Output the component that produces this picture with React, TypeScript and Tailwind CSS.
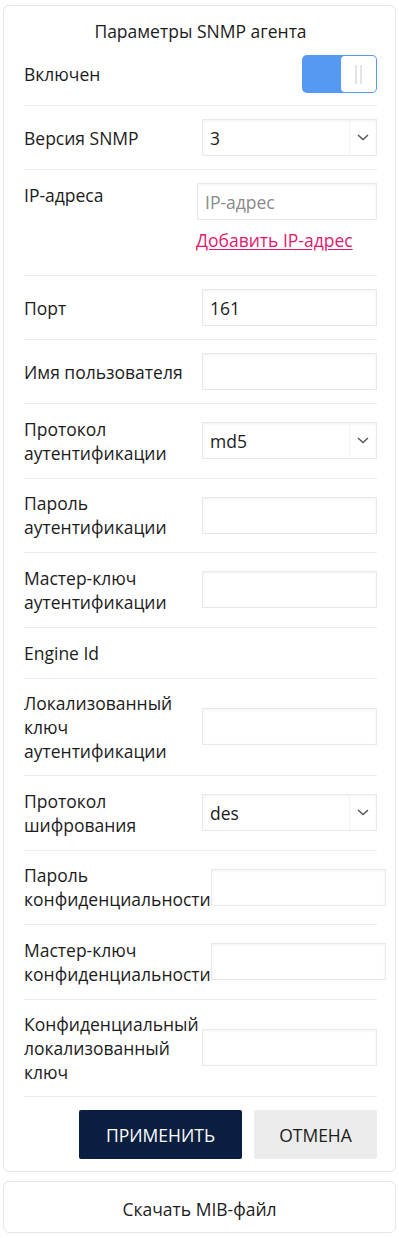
import React from "react";

type Row =
  | { kind: "input"; label: string[]; value?: string }
  | { kind: "select"; label: string[]; value: string }
  | { kind: "text"; label: string[] };

const ROWS: Row[] = [
  { kind: "input", label: ["Порт"], value: "161" },
  { kind: "input", label: ["Имя пользователя"] },
  { kind: "select", label: ["Протокол", "аутентификации"], value: "md5" },
  { kind: "input", label: ["Пароль", "аутентификации"] },
  { kind: "input", label: ["Мастер-ключ", "аутентификации"] },
  { kind: "text", label: ["Engine Id"] },
  { kind: "input", label: ["Локализованный", "ключ", "аутентификации"] },
  { kind: "select", label: ["Протокол", "шифрования"], value: "des" },
  { kind: "input", label: ["Пароль", "конфиденциальности"] },
  { kind: "input", label: ["Мастер-ключ", "конфиденциальности"] },
  { kind: "input", label: ["Конфиденциальный", "локализованный", "ключ"] },
];

// vertical padding per number of label lines
const PAD: Record<number, string> = {
  1: "py-[13px]",
  2: "py-[12.75px]",
  3: "py-[12.25px]",
};

const fieldBox =
  "h-[37px] flex-none bg-white border border-[#e9e9e9] shadow-[inset_0_1px_3px_rgba(0,0,0,0.06)]";

function Select({ value }: { value: string }) {
  return (
    <div className={`${fieldBox} w-[175px] flex items-center`}>
      <span className="flex-1 pl-[7px] text-[#1c1c1c]">{value}</span>
      <span className="h-full w-[27px] border-l border-[#f3f3f3] flex items-center justify-center">
        <svg width="12" height="7" viewBox="0 0 12 7" fill="none">
          <path d="M1 1l5 4.6L11 1" stroke="#555" strokeWidth="1.4" />
        </svg>
      </span>
    </div>
  );
}

function Input({
  value,
  placeholder,
  wide,
}: {
  value?: string;
  placeholder?: string;
  wide?: boolean;
}) {
  return (
    <div className={`${fieldBox} ${wide ? "w-[180px]" : "w-[175px]"} flex items-center pl-[7px]`}>
      {value ? (
        <span className="text-[#1c1c1c]">{value}</span>
      ) : (
        <span className="text-[#8a8a8a]">{placeholder}</span>
      )}
    </div>
  );
}

function Label({ lines, narrow }: { lines: string[]; narrow?: boolean }) {
  return (
    <div className={`flex-none ${narrow ? "basis-[173px]" : "basis-[178px]"}`}>
      {lines.map((l, i) => (
        <div key={i}>{l}</div>
      ))}
    </div>
  );
}

export default function App() {
  return (
    <div
      className="min-h-[1238px] bg-white px-[3px] pt-[5px] text-[17.5px] leading-[24px] text-[#1c1c1c]"
      style={{ fontFamily: '"Open Sans", "Noto Sans", sans-serif' }}
    >
      {/* Main card */}
      <div className="rounded-[6px] border border-[#e6e6e6] pl-[20px] pr-[18px] pt-[13px] pb-[12px]">
        <div className="text-center">Параметры SNMP агента</div>

        <div className="flex items-center justify-between pt-[12px] pb-[12px] border-b border-[#ececec]">
          <span>Включен</span>
          <div className="w-[75px] h-[38px] rounded-[5px] bg-[#5599f4] flex justify-end p-px">
            <div className="w-[35px] h-full bg-white rounded-[4px] flex items-center justify-center gap-[3px]">
              <span className="w-[2px] h-[19px] bg-[#e4e4e4]" />
              <span className="w-[2px] h-[19px] bg-[#e4e4e4]" />
            </div>
          </div>
        </div>

        <div className="flex items-center py-[13px] border-b border-[#ececec]">
          <Label lines={["Версия SNMP"]} />
          <Select value="3" />
        </div>

        <div className="flex items-start pt-[13px] pb-[23px] border-b border-[#ececec]">
          <Label lines={["IP-адреса"]} narrow />
          <div className="flex flex-col">
            <Input placeholder="IP-адрес" wide />
            <a className="mt-[8px] ml-[-1px] text-[#e2196e] underline underline-offset-2">
              Добавить IP-адрес
            </a>
          </div>
        </div>

        {ROWS.map((r, i) => (
          <div
            key={i}
            className={`flex items-center border-b border-[#ececec] ${PAD[r.label.length]}`}
          >
            <Label lines={r.label} />
            {r.kind === "input" && <Input value={r.value} />}
            {r.kind === "select" && <Select value={r.value} />}
          </div>
        ))}

        <div className="flex justify-end gap-[12px] pt-[13px]">
          <button className="w-[163px] h-[49px] rounded-[2px] bg-[#0a1e40] text-white uppercase">
            Применить
          </button>
          <button className="w-[123px] h-[49px] rounded-[2px] bg-[#ececec] text-[#1c1c1c] uppercase">
            Отмена
          </button>
        </div>
      </div>

      {/* Download card */}
      <div className="mt-[9px] rounded-[6px] border border-[#e6e6e6] h-[52px] flex items-center justify-center pt-[4px]">
        Скачать MIB-файл
      </div>
    </div>
  );
}
